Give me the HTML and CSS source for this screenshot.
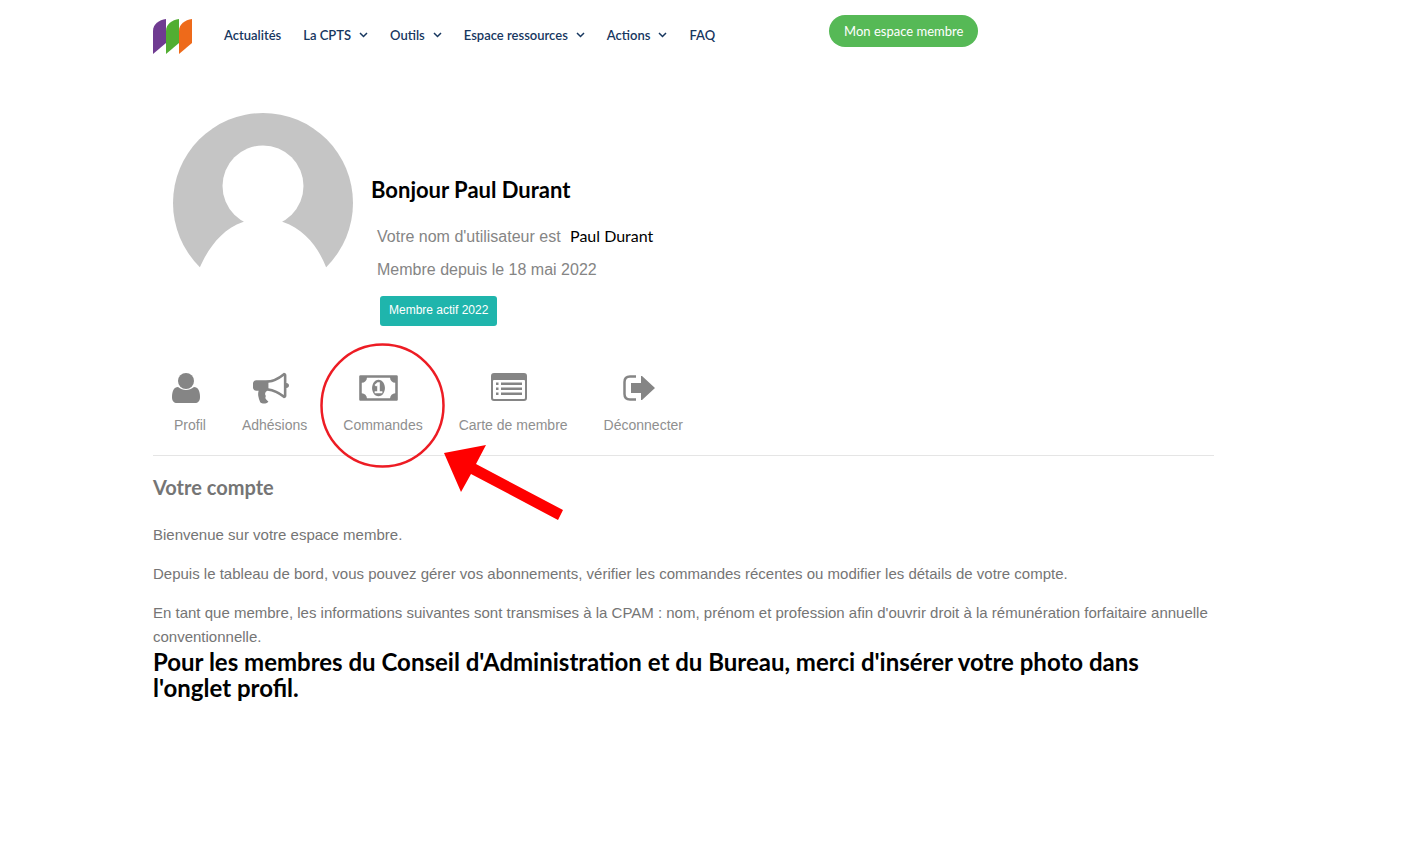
FILE: index.html
```html
<!DOCTYPE html>
<html lang="fr">
<head>
    <meta charset="UTF-8">
    <meta name="viewport" content="width=device-width, initial-scale=1">
    <title>Mon espace membre</title>
    <link rel="stylesheet" href="styles.css">
</head>
<body>

    <header class="site-header">
        <a href="#" class="logo" aria-label="Accueil">
            <svg width="40" height="36" viewBox="0 0 40 36">
                <path fill="#6f3b91" d="M0 35V12C0 5 6 1 13 0V24Z"/>
                <path fill="#52ae32" d="M13 35V12C13 5 19 1 26 0V24Z"/>
                <path fill="#ee6a1a" d="M26 35V12C26 5 32 1 39 0V24Z"/>
            </svg>
        </a>
        <nav class="main-nav">
            <a href="#">Actualités</a>
            <a href="#">La CPTS <svg class="chevron" viewBox="0 0 9 6"><path d="M1 1l3.500 3.500L8 1"/></svg></a>
            <a href="#">Outils <svg class="chevron" viewBox="0 0 9 6"><path d="M1 1l3.500 3.500L8 1"/></svg></a>
            <a href="#">Espace ressources <svg class="chevron" viewBox="0 0 9 6"><path d="M1 1l3.500 3.500L8 1"/></svg></a>
            <a href="#">Actions <svg class="chevron" viewBox="0 0 9 6"><path d="M1 1l3.500 3.500L8 1"/></svg></a>
            <a href="#">FAQ</a>
        </nav>
        <a href="#" class="member-button">Mon espace membre</a>
    </header>

    <main>
        <section class="profile">
            <svg class="avatar" viewBox="0 0 180 180">
                <circle cx="90" cy="90" r="90" fill="#c5c5c5"/>
                <circle cx="90" cy="73" r="40.500" fill="#fff"/>
                <path fill="#fff" d="M27 154C34 138 48 116 70 109L75 105H105L110 109C132 116 146 136 153 154V180H27Z"/>
            </svg>
            <div class="profile-text">
                <h1>Bonjour Paul Durant</h1>
                <p>Votre nom d'utilisateur est <span class="username">Paul Durant</span></p>
                <p>Membre depuis le 18 mai 2022</p>
                <span class="badge">Membre actif 2022</span>
            </div>
        </section>

        <nav class="tabs">
            <a href="#">
                <svg width="30" height="32" viewBox="0 0 30 32">
                    <path d="M7 15C3 15 1 19 1 25C1 29 3 31 6 31H24C27 31 29 29 29 25C29 19 27 15 23 15C18 19 12 19 7 15Z"/>
                    <circle cx="15" cy="9" r="8"/>
                </svg>
                Profil
            </a>
            <a href="#">
                <svg width="36" height="32" viewBox="0 96 1792 1593">
                    <path d="M1664 640q53 0 90.500 37.500t37.500 90.500-37.500 90.500-90.500 37.500v384q0 52-38 90t-90 38q-417-347-812-380-58 19-91 66t-31 100.500 40 92.500q-20 33-23 65.500t6 58 33.500 55 48 50 61.500 50.500q-29 58-111.500 83t-168.500 11.500-132-55.500q-7-23-29.500-87.500t-32-94.500-23-89-15-101 3.500-98.500 22-110.500h-122q-66 0-113-47t-47-113v-192q0-66 47-113t113-47h480q435 0 896-384 52 0 90 38t38 90v384zm-128 604v-954q-394 302-768 343v270q377 42 768 341z"/>
                </svg>
                Adhésions
            </a>
            <a href="#" class="current">
                <svg width="39" height="32" viewBox="0 100 1920 1592">
                    <path d="M768 1152h384v-96h-128v-448h-114l-148 137 77 80q42-37 55-57h2v288h-128v96zm512-256q0 70-21 142t-59.500 134-101.500 101-138 39-138-39-101.500-101-59.500-134-21-142 21-142 59.500-134 101.500-101 138-39 138 39 101.500 101 59.500 134 21 142zm512 256v-512q-106 0-181-75t-75-181h-1152q0 106-75 181t-181 75v512q106 0 181 75t75 181h1152q0-106 75-181t181-75zm128-832v1152q0 26-19 45t-45 19h-1792q-26 0-45-19t-19-45v-1152q0-26 19-45t45-19h1792q26 0 45 19t19 45z"/>
                </svg>
                Commandes
                <svg class="pointer" viewBox="0 0 244 178" aria-hidden="true">
                    <circle cx="62.500" cy="62.500" r="61" fill="none" stroke="#ed1c24" stroke-width="2.500"/>
                    <path fill="#f00" d="M124 110L166 102L156 121L243 167L238 177L151 131L141 149Z"/>
                </svg>
            </a>
            <a href="#">
                <svg width="36" height="32" viewBox="0 0 36 32">
                    <path fill-rule="evenodd" d="M3 1H33Q36 1 36 4V26Q36 29 33 29H3Q0 29 0 26V4Q0 1 3 1ZM3 8Q2 8 2 9V26Q2 27 3 27H33Q34 27 34 26V9Q34 8 33 8ZM5 10.500h2.500v2.500H5ZM10 10.500H31v2.500H10ZM5 15.500h2.500v2.500H5ZM10 15.500H31v2.500H10ZM5 20.500h2.500v2.500H5ZM10 20.500H31v2.500H10Z"/>
                </svg>
                Carte de membre
            </a>
            <a href="#">
                <svg width="32" height="32" viewBox="0 0 32 32">
                    <path fill="none" stroke="#858585" stroke-width="2.500" d="M13 4.500H7Q1.500 4.500 1.500 10V22Q1.500 27.500 7 27.500H13"/>
                    <path d="M8 11H18V4L19 4L32 16L19 28L18 28V21H8Z"/>
                </svg>
                Déconnecter
            </a>
        </nav>

        <section class="account">
            <h2>Votre compte</h2>
            <p>Bienvenue sur votre espace membre.</p>
            <p>Depuis le tableau de bord, vous pouvez gérer vos abonnements, vérifier les commandes récentes ou modifier les détails de votre compte.</p>
            <p>En tant que membre, les informations suivantes sont transmises à la CPAM : nom, prénom et profession afin d'ouvrir droit à la rémunération forfaitaire annuelle conventionnelle.</p>
            <h3>Pour les membres du Conseil d'Administration et du Bureau, merci d'insérer votre photo dans l'onglet profil.</h3>
        </section>
    </main>

</body>
</html>
```
FILE: styles.css
```css
body {
    font-family: "Liberation Sans", Arial, sans-serif;
    margin: 0;
    padding: 0 207px 0 153px;
    background-color: #fff;
    color: #757575;
}

a {
    color: inherit;
    text-decoration: none;
}

h1, h2, h3, p {
    margin: 0;
}

h1, h2, h3, .main-nav, .member-button, .username {
    font-family: Lato, Carlito, Calibri, sans-serif;
}

.site-header {
    display: flex;
    align-items: flex-start;
    padding-top: 15px;
}

.logo {
    display: block;
    height: 36px;
    margin: 4px 31px 0 0;
}

.main-nav {
    display: flex;
    gap: 22px;
    margin-right: 114px;
    font-size: 13px;
    font-weight: 600;
    line-height: 40px;
    white-space: nowrap;
    color: #17375f;
}

.main-nav a {
    display: flex;
    align-items: center;
    gap: 8px;
}

.chevron {
    width: 9px;
    height: 6px;
    fill: none;
    stroke: #17375f;
    stroke-width: 1.500;
}

.member-button {
    padding: 0 15px;
    border-radius: 16px;
    background-color: #56b956;
    color: #fff;
    font-size: 13px;
    line-height: 32px;
    white-space: nowrap;
}

.profile {
    display: flex;
    gap: 18px;
    padding: 58px 0 0 20px;
}

.avatar {
    width: 180px;
    height: 180px;
    flex-shrink: 0;
}

.profile-text {
    padding-top: 62px;
    font-size: 16px;
    line-height: 33px;
    color: #858585;
}

.profile-text h1 {
    margin-bottom: 15px;
    font-size: 22px;
    line-height: 30px;
    color: #000;
}

.profile-text p {
    padding-left: 6px;
}

.username {
    margin-left: 5px;
    line-height: 1;
    color: #000;
}

.badge {
    display: inline-block;
    margin: 10px 0 0 9px;
    padding: 0 9px 2px;
    border-radius: 3px;
    background-color: #1fb5ac;
    color: #fff;
    font-size: 12px;
    line-height: 28px;
}

.tabs {
    display: flex;
    gap: 36px;
    padding: 46px 0 20px 21px;
    border-bottom: 1px solid #e5e5e5;
    font-size: 14px;
    line-height: 20px;
    color: #8f8f8f;
}

.tabs a {
    display: flex;
    flex-direction: column;
    align-items: center;
    gap: 11px;
    white-space: nowrap;
}

.tabs a > svg {
    flex-shrink: 0;
    margin: 0 4px 0 -4px;
    fill: #858585;
}

.tabs .current {
    position: relative;
}

/* red circle and arrow drawn over the orders tab */
.tabs .current .pointer {
    position: absolute;
    top: -29px;
    left: -23px;
    width: 244px;
    height: 178px;
    margin: 0;
    pointer-events: none;
}

.account {
    padding-top: 17px;
    font-size: 15px;
    line-height: 24px;
}

.account h2 {
    margin-bottom: 22px;
    font-size: 20px;
    line-height: 28px;
}

.account p + p {
    margin-top: 15px;
}

.account h3 {
    font-size: 24px;
    line-height: 26px;
    color: #000;
}
```
